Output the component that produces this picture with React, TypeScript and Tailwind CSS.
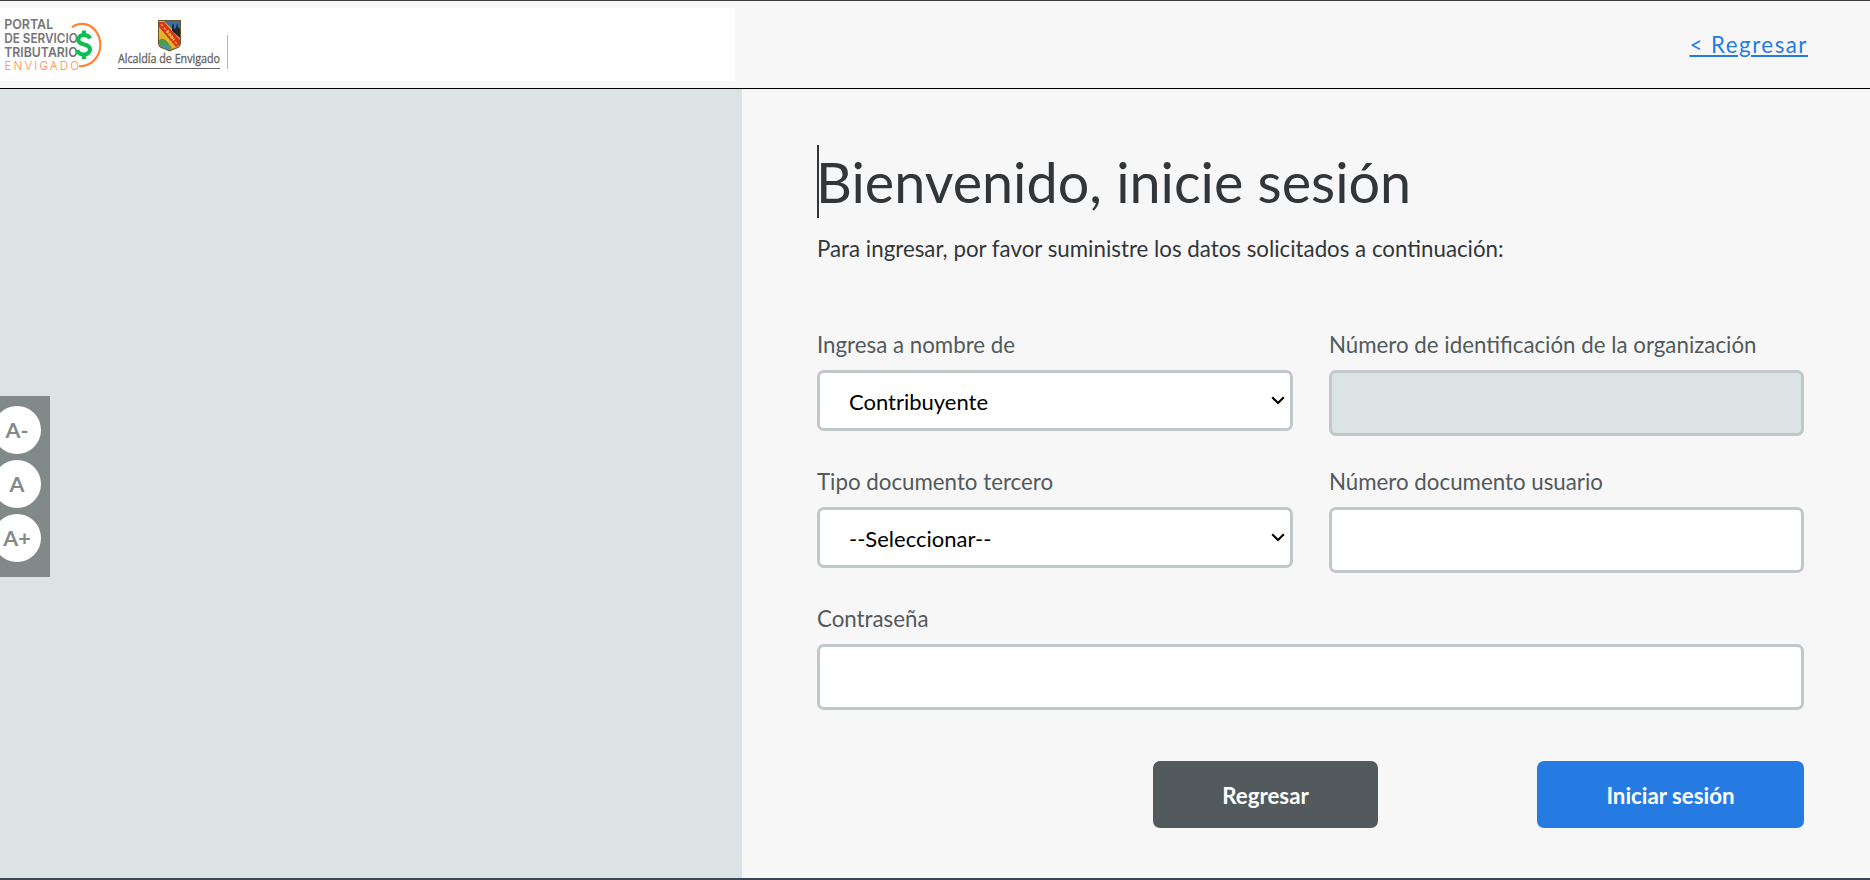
import type { ReactNode } from "react";

function Logos() {
  return (
    <svg width="240" height="73" viewBox="0 8 240 73" className="block shrink-0">
      <g fontFamily="Inter, sans-serif" fontWeight="600" fontSize="13.6" fill="#757575">
        <text x="4.200" y="29" textLength="49" lengthAdjust="spacingAndGlyphs">PORTAL</text>
        <text x="4.200" y="42.8" textLength="73.500" lengthAdjust="spacingAndGlyphs">DE SERVICIO</text>
        <text x="4.200" y="56.5" textLength="73.500" lengthAdjust="spacingAndGlyphs">TRIBUTARIO</text>
      </g>
      <text x="4.500" y="70" fontFamily="Inter, sans-serif" fontSize="11.6" fontWeight="300" fill="#ff8a45" textLength="74.500">
        ENVIGADO
      </text>
      <path d="M72 27.3C75.500 24.500 79 23.800 82.500 23.900C92.500 24.200 100.300 33.500 100.300 45C100.300 57 91 66.500 79 66.200" fill="none" stroke="#ff8133" strokeWidth="2.100" />
      <path d="M90 38.500C89 35.800 86.500 35 83.800 35C80.500 35 78.300 37 78.300 39.800C78.300 46.500 90 42.500 90 49.300C90 52.500 87.300 54.500 83.900 54.500C80.500 54.500 78 53 77.200 50M83.900 30.500V35M83.900 54.500V59" fill="none" stroke="#0fbd55" strokeWidth="4.200" />
      <path d="M158 20H181V43Q181 48 175 49L169.500 51.500L164 49Q158 48 158 43Z" fill="#6c552c" />
      <path d="M159 21H180V43Q180 47 174.500 48L169.500 50L164.500 48Q159 47 159 43Z" fill="#e8b52a" />
      <path d="M164 21H180V37Z" fill="#3c6fa8" />
      <path d="M172 31V26L173 23L174 26V29L176 28L177 23L178.500 28L180 29V38Z" fill="#20262b" />
      <path d="M159 40Q164 36 169 44L172 48L169.500 50L164.500 48Q159 47 159 43Z" fill="#4f9c48" />
      <path d="M160 46Q165 43 170 47L169.500 50L164.500 48Z" fill="#4a93b5" />
      <path d="M159 22H164L180 40V44L176 47L159 27Z" fill="#d7321f" />
      <path d="M161 24L177 44" stroke="#f0a62b" strokeWidth="1.500" strokeDasharray="3 1.500" />
      <path d="M167 31L174 40" stroke="#f7c43a" strokeWidth="3" strokeDasharray="2 1.500" />
      <text x="118" y="63" fontFamily="Open Sans, sans-serif" fontSize="12.800" fill="#666666" stroke="#666666" strokeWidth="0.350" textLength="102" lengthAdjust="spacingAndGlyphs">
        Alcaldía de Envigado
      </text>
      <path d="M118 68.500H220" stroke="#666666" />
      <path d="M227.500 35V69" stroke="#b5b5b5" />
    </svg>
  );
}

function Field({ label, className = "", children }: { label: string; className?: string; children: ReactNode }) {
  return (
    <div className={`flex h-[137px] flex-col ${className}`}>
      <label className="flex h-[39px] shrink-0 items-start leading-[27px] whitespace-nowrap text-[#525a5d]">{label}</label>
      {children}
    </div>
  );
}

function SelectBox({ value }: { value: string }) {
  return (
    <button type="button" className="flex h-[61px] w-full shrink-0 items-center justify-between rounded-[7px] border-3 border-[#c0c8ca] bg-white pt-0.5 pr-[5px] pl-[29px] text-left text-[22px] leading-[27px] text-black">
      <span>{value}</span>
      <svg width="14" height="9" viewBox="0 0 14 9" className="mb-[2px]">
        <path d="M1.200 1.300L7 7.100L12.800 1.300" fill="none" stroke="currentColor" strokeWidth="2.100" />
      </svg>
    </button>
  );
}

const inputClass = "block h-[66px] w-full shrink-0 rounded-[7px] border-3 border-[#c0c8ca] bg-white px-7 outline-none disabled:bg-[#dbe3e5]";

function FontSizeButton({ children }: { children: ReactNode }) {
  return (
    <button type="button" className="flex size-12 shrink-0 items-center justify-center rounded-full bg-white pt-0.5 text-[21.5px] leading-none font-bold text-[#818989]">
      {children}
    </button>
  );
}

export default function App() {
  return (
    <div className="flex h-[880px] w-[1870px] flex-col overflow-hidden border-t border-b-2 border-t-[#3f3d40] border-b-[#3c4858] bg-[#f7f7f7] font-[Lato,sans-serif] text-[22.3px]">
      <header className="flex h-[88px] shrink-0 items-center justify-between border-b border-black pr-[62px]">
        <div className="flex h-[73px] w-[735px] bg-white">
          <Logos />
        </div>
        <a href="#" className="-mt-px leading-[27px] tracking-[1.5px] text-[#267be2] underline decoration-2 underline-offset-[2px]">
          &lt; Regresar
        </a>
      </header>
      <div className="flex min-h-0 flex-1">
        <aside className="flex w-[742px] shrink-0 items-start bg-[#dbe3e5] pt-[307px]">
          <div className="flex h-[181px] w-[50px] flex-col items-end gap-1.5 overflow-hidden bg-[#818989] pt-2.5 pr-[9px]">
            <FontSizeButton>A-</FontSizeButton>
            <FontSizeButton>A</FontSizeButton>
            <FontSizeButton>A+</FontSizeButton>
          </div>
        </aside>
        <main className="flex-1 pt-14 pr-[66px] pl-[75px]">
          <h1 className="h-[73px] border-l-2 border-[#323639] indent-[-3px] text-[55.7px] leading-[73px] whitespace-nowrap text-[#323639]">
            Bienvenido, inicie sesión
          </h1>
          <p className="mt-[17px] leading-[27px] whitespace-nowrap text-[#323639]">
            Para ingresar, por favor suministre los datos solicitados a continuación:
          </p>
          <form className="mt-[69px]">
            <div className="grid grid-cols-[476px_475px] gap-x-9">
              <Field label="Ingresa a nombre de">
                <SelectBox value="Contribuyente" />
              </Field>
              <Field label="Número de identificación de la organización">
                <input disabled className={inputClass} />
              </Field>
              <Field label="Tipo documento tercero">
                <SelectBox value="--Seleccionar--" />
              </Field>
              <Field label="Número documento usuario">
                <input className={inputClass} />
              </Field>
              <Field label="Contraseña" className="col-span-2">
                <input type="password" className={inputClass} />
              </Field>
            </div>
            <div className="mt-[19px] flex justify-end gap-[159px] font-bold text-white">
              <button type="button" className="h-[67px] w-[225px] rounded-[7px] bg-[#525a5d] pt-0.5">Regresar</button>
              <button type="button" className="h-[67px] w-[267px] rounded-[7px] bg-[#267be2] pt-0.5">Iniciar sesión</button>
            </div>
          </form>
        </main>
      </div>
    </div>
  );
}
